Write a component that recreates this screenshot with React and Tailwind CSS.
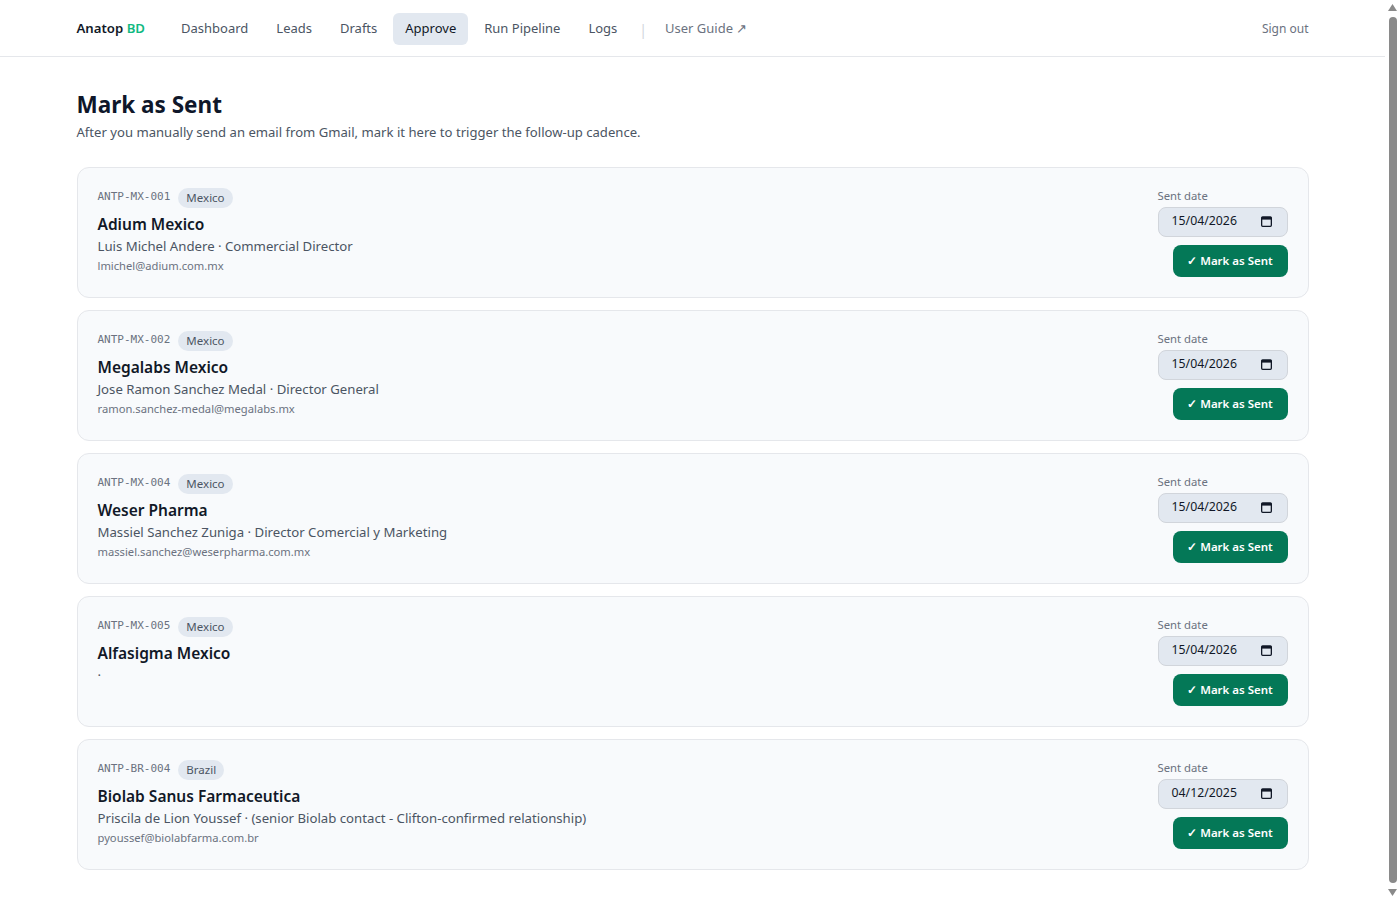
import React from "react";

const leads = [
  { id: "ANTP-MX-001", country: "Mexico", company: "Adium Mexico", contact: "Luis Michel Andere · Commercial Director", email: "lmichel@adium.com.mx", date: "15/04/2026" },
  { id: "ANTP-MX-002", country: "Mexico", company: "Megalabs Mexico", contact: "Jose Ramon Sanchez Medal · Director General", email: "ramon.sanchez-medal@megalabs.mx", date: "15/04/2026" },
  { id: "ANTP-MX-004", country: "Mexico", company: "Weser Pharma", contact: "Massiel Sanchez Zuniga · Director Comercial y Marketing", email: "massiel.sanchez@weserpharma.com.mx", date: "15/04/2026" },
  { id: "ANTP-MX-005", country: "Mexico", company: "Alfasigma Mexico", contact: "·", email: "", date: "15/04/2026" },
  { id: "ANTP-BR-004", country: "Brazil", company: "Biolab Sanus Farmaceutica", contact: "Priscila de Lion Youssef · (senior Biolab contact - Clifton-confirmed relationship)", email: "pyoussef@biolabfarma.com.br", date: "04/12/2025" },
];

function CalendarIcon() {
  return (
    <svg width="11" height="11" viewBox="0 0 11 11" fill="none">
      <rect x="0.65" y="1" width="9.7" height="9.3" rx="1" stroke="#111827" strokeWidth="1.3" />
      <rect x="0.5" y="1" width="10" height="2.6" fill="#111827" />
    </svg>
  );
}

function Card({ lead }) {
  return (
    <div className="flex justify-between rounded-xl border border-[#e5e7eb] bg-[#f8fafc] p-5">
      <div className="flex flex-col">
        <div className="flex items-center gap-2">
          <span className="text-[11px] text-[#6b7280]" style={{ fontFamily: '"DejaVu Sans Mono", monospace' }}>{lead.id}</span>
          <span className="flex h-5 items-center rounded-full bg-[#e2e8f0] px-2 text-[11.5px] text-[#4b5563]">{lead.country}</span>
        </div>
        <div className="mt-[4px] text-[15.5px] font-semibold leading-6 text-[#111827]">{lead.company}</div>
        <div className="text-[13.2px] leading-5 text-[#4b5563]">{lead.contact}</div>
        <div className="mt-[2px] text-[11.2px] leading-4 text-[#6b7280]">{lead.email}</div>
      </div>
      <div className="flex flex-col items-end">
        <div className="flex flex-col">
          <span className="text-[11.3px] leading-4 text-[#6b7280]">Sent date</span>
          <div className="mt-[3px] flex h-[30px] w-[130px] items-center justify-between rounded-lg border border-[#d1d5db] bg-[#e2e8f0] pl-[13px] pr-[15px] text-[12.3px] text-[#111827]">
            <span>{lead.date}</span>
            <CalendarIcon />
          </div>
        </div>
        <button className="mt-2 flex h-8 w-[115px] items-center justify-center rounded-lg bg-[#047857] text-[11.5px] font-semibold text-white">
          ✓ Mark as Sent
        </button>
      </div>
    </div>
  );
}

function FakeScrollbar() {
  return (
    <div className="flex h-screen w-[15px] shrink-0 flex-col items-center bg-white">
      <svg width="15" height="15" viewBox="0 0 15 15" className="shrink-0">
        <path d="M3 11 L7.5 4 L12 11 Z" fill="#8a8a8a" />
      </svg>
      <div className="my-[2px] w-2 flex-1 rounded-full bg-[#8a8a8a]" />
      <svg width="15" height="15" viewBox="0 0 15 15" className="shrink-0">
        <path d="M3 4 L12 4 L7.5 11 Z" fill="#8a8a8a" />
      </svg>
    </div>
  );
}

export default function App() {
  const links = ["Dashboard", "Leads", "Drafts", "Approve", "Run Pipeline", "Logs"];
  return (
    <div className="flex h-screen overflow-hidden bg-white" style={{ fontFamily: '"Noto Sans", "Open Sans", sans-serif' }}>
      <div className="min-w-0 flex-1">
        <header className="border-b border-[#e5e7eb]">
          <div className="mx-auto flex h-14 max-w-7xl items-center justify-between px-6 pt-[2px]">
            <div className="flex items-center">
              <span className="text-[13.2px] font-semibold text-[#111827]">
                Anatop <span className="text-[#10b981]">BD</span>
              </span>
              <nav className="ml-6 flex items-center gap-1">
                {links.map((l) => (
                  <a
                    key={l}
                    className={
                      l === "Approve"
                        ? "rounded-md bg-[#e2e8f0] px-3 py-[6px] text-[13px] text-[#111827]"
                        : "rounded-md px-3 py-[6px] text-[13px] text-[#4b5563]"
                    }
                  >
                    {l}
                  </a>
                ))}
                <span className="mx-[6px] text-[14px] text-[#d1d5db]">|</span>
                <a className="px-2 py-[6px] text-[13px] text-[#6b7280]">User Guide ↗</a>
              </nav>
            </div>
            <a className="text-[12px] text-[#6b7280]">Sign out</a>
          </div>
        </header>
        <main className="mx-auto max-w-7xl px-6 pb-10 pt-8">
          <h1 className="text-[22.5px] font-bold leading-8 text-[#0f172a]">Mark as Sent</h1>
          <p className="mt-[2px] text-[13.1px] text-[#4b5563]">
            After you manually send an email from Gmail, mark it here to trigger the follow-up cadence.
          </p>
          <div className="mt-6 flex flex-col gap-3">
            {leads.map((l) => (
              <Card key={l.id} lead={l} />
            ))}
          </div>
        </main>
      </div>
      <FakeScrollbar />
    </div>
  );
}
